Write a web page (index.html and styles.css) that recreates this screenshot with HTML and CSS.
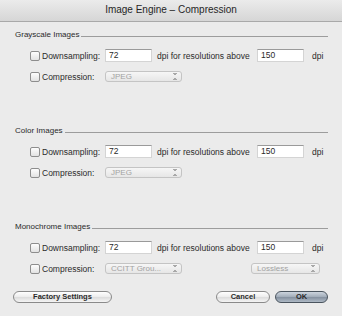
FILE: index.html
```html
<!DOCTYPE html>
<html lang="en">
<head>
    <meta charset="UTF-8">
    <title>Image Engine - Compression</title>
    <link rel="stylesheet" href="styles.css">
</head>
<body>
    <div class="window">
        <div class="titlebar">Image Engine &ndash; Compression</div>

        <div class="content">
            <!-- Grayscale -->
            <div class="section">
                <div class="section-head"><span>Grayscale Images</span><div class="rule"></div></div>
                <div class="row">
                    <div class="check"></div>
                    <span class="label">Downsampling:</span>
                    <div class="field">72</div>
                    <span class="mid">dpi for resolutions above</span>
                    <div class="field">150</div>
                    <span class="unit">dpi</span>
                </div>
                <div class="row">
                    <div class="check"></div>
                    <span class="label">Compression:</span>
                    <div class="popup">JPEG<span class="arrows"></span></div>
                </div>
            </div>

            <!-- Color -->
            <div class="section">
                <div class="section-head"><span>Color Images</span><div class="rule"></div></div>
                <div class="row">
                    <div class="check"></div>
                    <span class="label">Downsampling:</span>
                    <div class="field">72</div>
                    <span class="mid">dpi for resolutions above</span>
                    <div class="field">150</div>
                    <span class="unit">dpi</span>
                </div>
                <div class="row">
                    <div class="check"></div>
                    <span class="label">Compression:</span>
                    <div class="popup">JPEG<span class="arrows"></span></div>
                </div>
            </div>

            <!-- Monochrome -->
            <div class="section">
                <div class="section-head"><span>Monochrome Images</span><div class="rule"></div></div>
                <div class="row">
                    <div class="check"></div>
                    <span class="label">Downsampling:</span>
                    <div class="field">72</div>
                    <span class="mid">dpi for resolutions above</span>
                    <div class="field">150</div>
                    <span class="unit">dpi</span>
                </div>
                <div class="row">
                    <div class="check"></div>
                    <span class="label">Compression:</span>
                    <div class="popup">CCITT Grou...<span class="arrows"></span></div>
                    <div class="popup popup-wide">Lossless<span class="arrows"></span></div>
                </div>
            </div>

            <div class="buttons">
                <button class="btn btn-factory">Factory Settings</button>
                <div class="spacer"></div>
                <button class="btn btn-cancel">Cancel</button>
                <button class="btn btn-ok">OK</button>
            </div>
        </div>
    </div>
</body>
</html>
```
FILE: styles.css
```css
body {
    margin: 0;
    font-family: "Liberation Sans", Arial, sans-serif;
    color: #1e1e1e;
    background: #ebebeb;
}

.window {
    width: 342px;
    height: 316px;
    background: #ebebeb;
    overflow: hidden;
}

.titlebar {
    height: 21px;
    line-height: 19px;
    text-align: center;
    font-size: 10px;
    color: #262626;
    background: linear-gradient(#ebebeb, #d6d6d6);
    border-bottom: 1px solid #a9a9a9;
}

.content {
    padding: 6px 14px 0 15px;
}

.section {
    margin-bottom: 37px;
}

.section-head {
    display: flex;
    align-items: center;
    height: 12px;
    font-size: 8px;
    color: #2a2a2a;
    margin-bottom: 5px;
}

.rule {
    flex: 1;
    height: 0;
    margin: 5px 0 0 2px;
    border-top: 1px solid #9c9c9c;
}

.row {
    display: flex;
    align-items: center;
    height: 21px;
    padding-left: 15px;
    font-size: 8.5px;
    color: #2a2a2a;
}

.check {
    width: 10px;
    height: 10px;
    box-sizing: border-box;
    border: 1px solid #8d8d8d;
    border-radius: 2px;
    background: linear-gradient(#fdfdfd, #e2e2e2);
    margin-right: 2px;
}

.label {
    width: 63px;
}

.field {
    width: 47px;
    height: 13px;
    box-sizing: border-box;
    background: #fff;
    border: 1px solid #d4d4d4;
    border-top-color: #9a9a9a;
    padding-left: 3px;
    line-height: 11px;
}

.mid {
    width: 105px;
    padding-left: 5px;
    box-sizing: border-box;
}

.unit {
    margin-left: 8px;
}

.popup {
    position: relative;
    width: 77px;
    height: 11px;
    box-sizing: border-box;
    border: 1px solid #c4c4c4;
    border-radius: 3px;
    background: linear-gradient(#f6f6f6, #e6e6e6);
    color: #a2a2a2;
    font-size: 8px;
    line-height: 9px;
    padding-left: 5px;
}

.popup-wide {
    width: 69px;
    margin-left: 69px;
}

.arrows {
    position: absolute;
    right: 4px;
    top: 1px;
    width: 4px;
    height: 7px;
    background:
        linear-gradient(to top right, transparent 50%, #a8a8a8 50%) 0 0 / 2px 3px no-repeat,
        linear-gradient(to top left, transparent 50%, #a8a8a8 50%) 2px 0 / 2px 3px no-repeat,
        linear-gradient(to bottom right, transparent 50%, #a8a8a8 50%) 0 4px / 2px 3px no-repeat,
        linear-gradient(to bottom left, transparent 50%, #a8a8a8 50%) 2px 4px / 2px 3px no-repeat;
}

.buttons {
    display: flex;
    align-items: center;
    margin: -25px 0 0 -2px;
}

.spacer {
    flex: 1;
}

.btn {
    height: 12px;
    padding: 0;
    border: 1px solid #8a8a8a;
    border-radius: 6px;
    background: linear-gradient(#ffffff, #ececec 50%, #dcdcdc 51%, #f4f4f4);
    font-family: "Liberation Sans", Arial, sans-serif;
    font-size: 7.5px;
    font-weight: bold;
    color: #2a2a2a;
    line-height: 10px;
}

.btn-factory {
    width: 99px;
}

.btn-cancel {
    width: 54px;
    margin-right: 5px;
}

.btn-ok {
    width: 53px;
    border-color: #4a545e;
    background: linear-gradient(#cdd5de, #a0abb8 50%, #84909f 51%, #aeb9c5);
}
```
